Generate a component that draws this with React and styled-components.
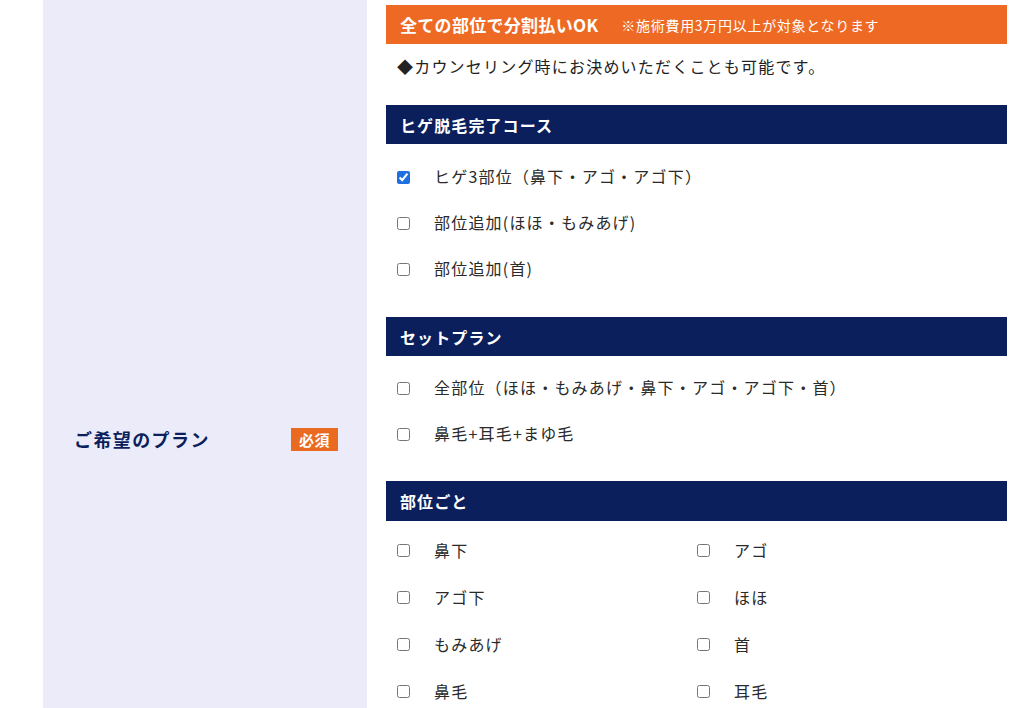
import React from "react";
import styled, { createGlobalStyle } from "styled-components";

const GlobalStyle = createGlobalStyle`
  html, body { margin: 0; padding: 0; background: #ffffff; }
  body {
    font-family: "Noto Sans CJK JP", "Noto Sans", "Liberation Sans", sans-serif;
    color: #333333;
  }
  * { box-sizing: border-box; }
`;

const Page = styled.div`
  display: flex;
  padding-left: 43px;
  min-height: 878px;
  overflow: hidden;
`;

const LabelCell = styled.div`
  width: 324px;
  flex: none;
  background: #ebebfa;
  display: flex;
  align-items: center;
  justify-content: space-between;
  padding: 0 29px 0 31px;
`;

const LabelText = styled.div`
  font-size: 18px;
  font-weight: 700;
  letter-spacing: 1.4px;
  color: #0c1f5a;
`;

const Badge = styled.span`
  background: #ea6a22;
  color: #ffffff;
  font-size: 15px;
  font-weight: 700;
  height: 23px;
  line-height: 23px;
  padding: 0 8px;
  letter-spacing: 0.5px;
`;

const FieldCell = styled.div`
  flex: 1;
  padding: 5px 17px 0 19px;
`;

const PromoBar = styled.div`
  height: 39px;
  background: #ee6a24;
  color: #ffffff;
  display: flex;
  align-items: center;
  padding-left: 14px;
  gap: 23px;
`;

const PromoTitle = styled.span`
  font-size: 17px;
  font-weight: 700;
  letter-spacing: 0.3px;
`;

const PromoNote = styled.span`
  font-size: 14px;
  letter-spacing: 0.7px;
`;

const Note = styled.p`
  margin: 0;
  padding: 10px 0 0 11px;
  height: 61px;
  font-size: 16px;
  letter-spacing: 1.2px;
  line-height: 24px;
  color: #222222;
`;

const Section = styled.section`
  margin-bottom: ${(p) => p.$gap}px;
`;

const SectionHeader = styled.h3`
  margin: 0;
  height: ${(p) => (p.$tall ? 40 : 39)}px;
  background: #0b1f5c;
  color: #ffffff;
  font-size: 16px;
  font-weight: 700;
  letter-spacing: 1.1px;
  display: flex;
  align-items: center;
  padding-left: 14px;
`;

const OptionList = styled.div`
  display: grid;
  grid-template-columns: ${(p) => (p.$columns === 2 ? "300px 1fr" : "1fr")};
  padding-top: ${(p) => p.$top}px;
`;

const Option = styled.label`
  height: ${(p) => p.$h}px;
  display: flex;
  align-items: center;
  padding-left: 11px;
  font-size: 16px;
  letter-spacing: 1.2px;
  color: #2a2a2a;
  cursor: pointer;
`;

const Check = styled.input.attrs({ type: "checkbox" })`
  width: 13px;
  height: 13px;
  margin: 2px 24px 0 0;
  flex: none;
  accent-color: #1f6fe0;
`;

const sections = [
  {
    title: "ヒゲ脱毛完了コース",
    columns: 1,
    top: 9,
    h: 46,
    gap: 26,
    items: [
      { label: "ヒゲ3部位（鼻下・アゴ・アゴ下）", checked: true },
      { label: "部位追加(ほほ・もみあげ)" },
      { label: "部位追加(首)" },
    ],
  },
  {
    title: "セットプラン",
    columns: 1,
    top: 8,
    h: 46,
    gap: 25,
    items: [
      { label: "全部位（ほほ・もみあげ・鼻下・アゴ・アゴ下・首）" },
      { label: "鼻毛+耳毛+まゆ毛" },
    ],
  },
  {
    title: "部位ごと",
    columns: 2,
    top: 5,
    h: 47,
    gap: 26,
    tall: true,
    items: [
      { label: "鼻下" },
      { label: "アゴ" },
      { label: "アゴ下" },
      { label: "ほほ" },
      { label: "もみあげ" },
      { label: "首" },
      { label: "鼻毛" },
      { label: "耳毛" },
    ],
  },
];

export default function App() {
  return (
    <>
      <GlobalStyle />
      <Page>
        <LabelCell>
          <LabelText>ご希望のプラン</LabelText>
          <Badge>必須</Badge>
        </LabelCell>
        <FieldCell>
          <PromoBar>
            <PromoTitle>全ての部位で分割払いOK</PromoTitle>
            <PromoNote>※施術費用3万円以上が対象となります</PromoNote>
          </PromoBar>
          <Note>◆カウンセリング時にお決めいただくことも可能です。</Note>
          {sections.map((s) => (
            <Section key={s.title} $gap={s.gap}>
              <SectionHeader $tall={s.tall}>{s.title}</SectionHeader>
              <OptionList $columns={s.columns} $top={s.top}>
                {s.items.map((it) => (
                  <Option key={it.label} $h={s.h}>
                    <Check defaultChecked={!!it.checked} />
                    {it.label}
                  </Option>
                ))}
              </OptionList>
            </Section>
          ))}
        </FieldCell>
      </Page>
    </>
  );
}
